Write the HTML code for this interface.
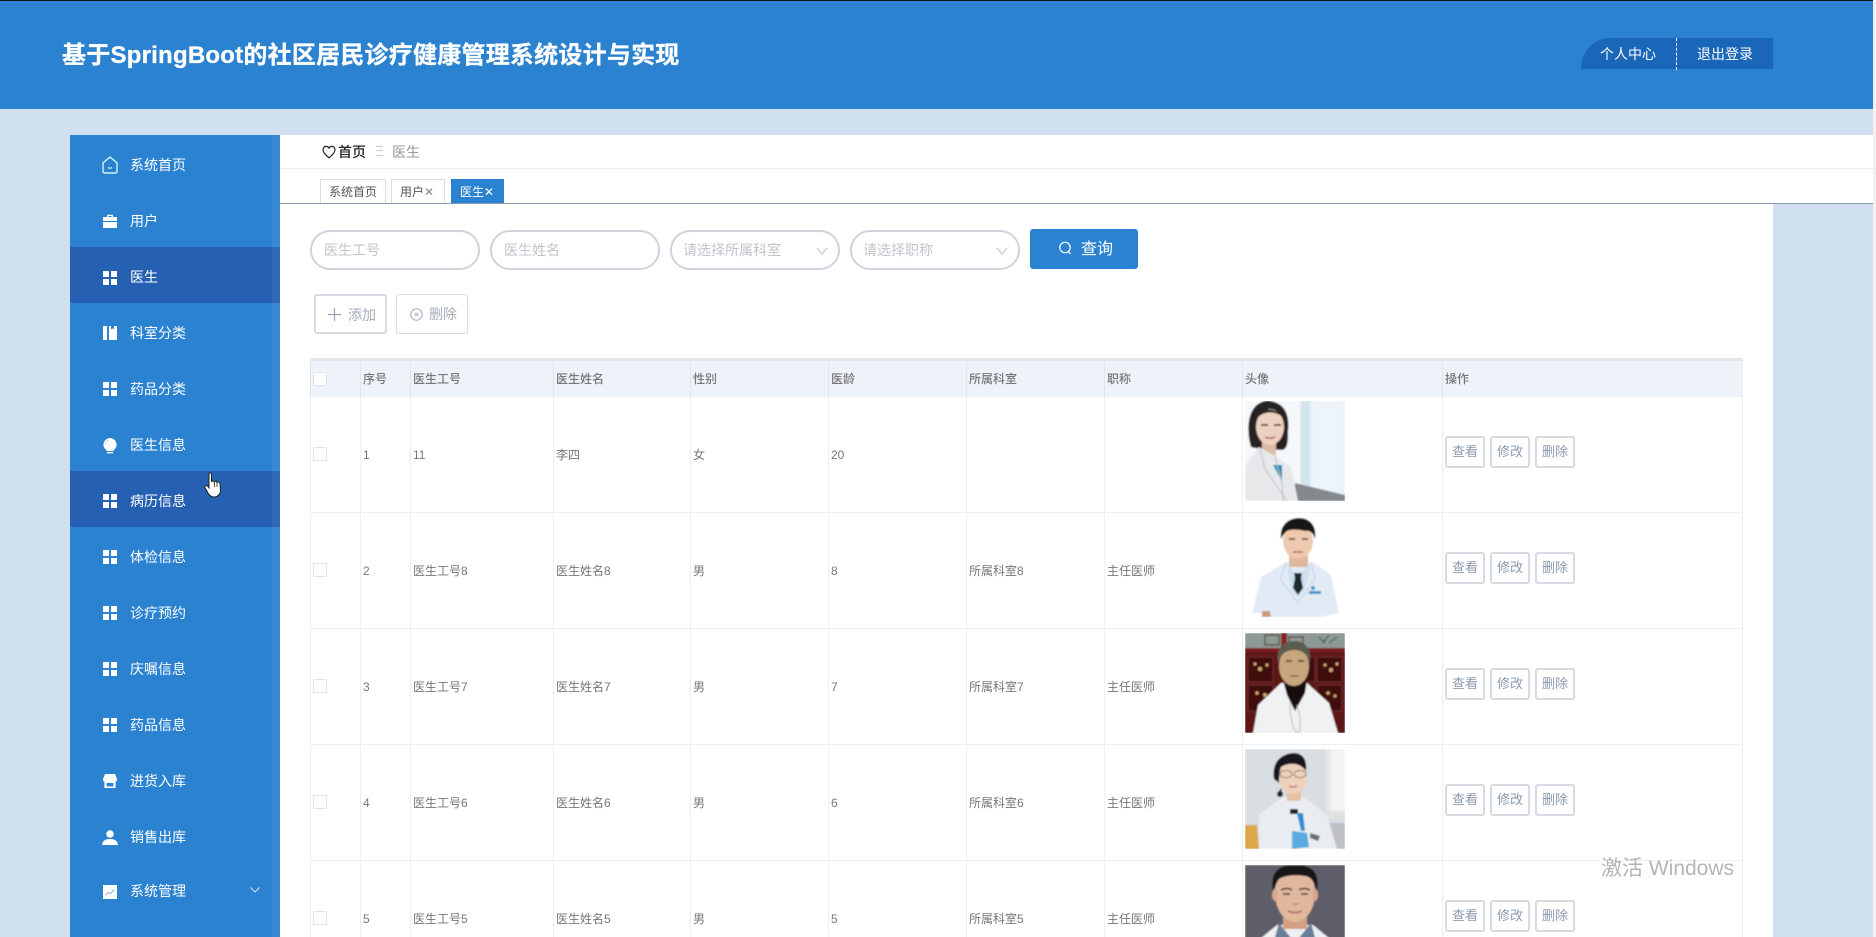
<!DOCTYPE html>
<html lang="zh-CN">
<head>
<meta charset="utf-8">
<title>基于SpringBoot的社区居民诊疗健康管理系统设计与实现</title>
<style>
*{box-sizing:border-box;margin:0;padding:0}
html,body{width:1876px;height:937px;overflow:hidden;background:#d0e0f0;font-family:"Liberation Sans","Noto Sans CJK SC",sans-serif}
#w{position:absolute;left:0;top:0;width:1876px;height:937px;overflow:hidden;background:#d0e0f0}
.abs{position:absolute}
#top{position:absolute;left:0;top:0;width:1873px;height:109px;background:#2b82d0;border-top:1px solid #111}
#title{position:absolute;left:62px;top:38px;font-size:24px;line-height:34px;font-weight:700;color:#fff;white-space:nowrap;letter-spacing:.23px;-webkit-text-stroke:.3px #fff}
#ubtn{position:absolute;left:1581px;top:38px;width:192px;height:31px;background:#1a66b8;border-radius:30px 0 0 0}
#ubtn span{position:absolute;top:6px;font-size:14px;line-height:20px;color:#fff;white-space:nowrap}
#ubtn i{position:absolute;left:95px;top:0;height:32px;border-left:1px dashed #fff}
#sb{position:absolute;left:70px;top:135px;width:210px;height:802px;background:#2b82d0}
#sb:after{content:"";position:absolute;right:0;top:0;width:8px;height:100%;background:rgba(255,255,255,.06)}
.it{position:relative;height:56px;color:#fff;font-size:14px}
.it.on{background:#2560b3}
.it b{position:absolute;left:60px;top:20px;font-weight:400;line-height:20px;white-space:nowrap}
.it svg{position:absolute;left:32px;top:20px}
#scr{position:absolute;left:1873px;top:0;width:3px;height:937px;background:#f1f1f1}
#hd{position:absolute;left:280px;top:135px;width:1593px;height:69px;background:#fff;border-bottom:1px solid #8a9db0}
#hd .ln{position:absolute;left:0;right:0;top:33px;border-top:1px solid #eee}
.tab{position:absolute;top:44px;height:24px;border:1px solid #ddd;border-bottom:0;background:#fff;font-size:12px;line-height:25px;color:#555;white-space:nowrap;padding-left:8px}
.tab.a{background:#2b82d0;color:#fff;border-color:#2b82d0}
.tab em{font-style:normal;color:#888;font-size:12px}
.tab.a em{color:#fff}
#main{position:absolute;left:280px;top:204px;width:1493px;height:733px;background:#fff}
.inp{position:absolute;top:230px;width:170px;height:40px;border:2px solid #cfd3de;border-radius:20px;background:#fff;font-size:14px;line-height:36px;color:#c0c4cc;padding-left:12px;white-space:nowrap}
.inp svg{position:absolute;right:10px;top:15px}
#q{position:absolute;left:1030px;top:229px;width:108px;height:40px;background:#2b82d0;border-radius:3px;color:#fff;font-size:16px;line-height:42px}
#q span{position:absolute;left:51px;top:0}
#q svg{position:absolute;left:28px;top:12px}
.b1{position:absolute;top:294px;height:40px;background:#fff;border-radius:3px;font-size:14px;color:#a3adba;line-height:38px}
#tb{position:absolute;left:310px;top:358px;width:1433px;border-collapse:separate;border-spacing:0;table-layout:fixed;border-top:3px solid #e3e6ea;font-size:12px;color:#777}
#tb th{height:36px;background:#edf3f9;font-weight:500;text-align:left;padding-left:2px;border-left:1px solid #e2e6ea;line-height:36px;color:#777;white-space:nowrap;overflow:hidden}
#tb td{height:116px;padding-left:2px;border-left:1px solid #eeeff1;border-bottom:1px solid #eeeff1;white-space:nowrap;vertical-align:middle;overflow:hidden}
#tb td:last-child,#tb th:last-child{border-right:1px solid #eeeff1}
#tb td.im{vertical-align:top;padding-top:4px;padding-left:2px}
#tb td.im svg{display:block}
#tb td.op{vertical-align:top;padding-top:39px;padding-left:2px}
.ck{display:block;width:14px;height:14px;border:1px solid #e2e4e8;border-radius:2px;background:#fff;margin-top:-1px}
.ob{display:inline-block;width:40px;height:32px;border:2px solid #d7dae2;border-radius:3px;margin-right:5px;font-size:13px;line-height:28px;text-align:center;color:#8c9bb0;background:#fff;float:left}
#wm{position:absolute;left:1601px;top:855px;font-size:21px;line-height:28px;color:#b5b5b5;white-space:nowrap}
</style>
</head>
<body>
<div id="w">
<div id="main"></div>
<div id="top">
  <div id="title">基于SpringBoot的社区居民诊疗健康管理系统设计与实现</div>
</div>
<div id="ubtn"><span style="left:19px">个人中心</span><i></i><span style="left:116px">退出登录</span></div>

<div id="sb">
  <div class="it"><svg width="16" height="18" viewBox="0 0 16 18" style="top:21px"><path d="M8 1 L15 7 V15.5 a1.5 1.5 0 0 1-1.5 1.5 H2.5 A1.5 1.5 0 0 1 1 15.5 V7 Z" fill="none" stroke="#d6f2f8" stroke-width="1.4"/><path d="M6 11.5 q2 1.4 4 0" fill="none" stroke="#d6f2f8" stroke-width="1.2"/></svg><b>系统首页</b></div>
  <div class="it"><svg width="14" height="14" viewBox="0 0 14 14" style="left:33px;top:23px"><path d="M4 3 V0.8 H10 V3 H14 V7 H0 V3 Z M5.4 3 H8.6 V2 H5.4 Z" fill="#fff" fill-rule="evenodd"/><rect x="0" y="8" width="14" height="6" fill="#fff"/></svg><b>用户</b></div>
  <div class="it on"><svg width="14" height="14" viewBox="0 0 14 14" style="left:33px;top:24px"><path d="M0 0h6v6H0zM8 0h6v6H8zM0 8h6v6H0zM8 8h6v6H8z" fill="#fff"/></svg><b>医生</b></div>
  <div class="it"><svg width="14" height="14" viewBox="0 0 14 14" style="left:33px;top:23px"><path d="M0 0h4v14H0zM6 0h2v3.5l1.5-1.2L11 3.5V0h3v14H6z" fill="#fff"/></svg><b>科室分类</b></div>
  <div class="it"><svg width="14" height="14" viewBox="0 0 14 14" style="left:33px;top:23px"><path d="M0 0h6v6H0zM8 0h6v6H8zM0 8h6v6H0zM8 8h6v6H8z" fill="#fff"/></svg><b>药品分类</b></div>
  <div class="it"><svg width="14" height="16" viewBox="0 0 14 16" style="left:33px;top:23px"><path d="M7 0 a6.6 6.6 0 0 1 3.6 12.1 V13 H3.4 V12.1 A6.6 6.6 0 0 1 7 0 Z" fill="#fff"/><rect x="4" y="14" width="6" height="1.4" fill="#fff"/><path d="M2.5 6 a4.5 4.5 0 0 1 3-3.8" fill="none" stroke="#b9daf2" stroke-width="1"/></svg><b>医生信息</b></div>
  <div class="it on"><svg width="14" height="14" viewBox="0 0 14 14" style="left:33px;top:23px"><path d="M0 0h6v6H0zM8 0h6v6H8zM0 8h6v6H0zM8 8h6v6H8z" fill="#fff"/></svg><b>病历信息</b></div>
  <div class="it"><svg width="14" height="14" viewBox="0 0 14 14" style="left:33px;top:23px"><path d="M0 0h6v6H0zM8 0h6v6H8zM0 8h6v6H0zM8 8h6v6H8z" fill="#fff"/></svg><b>体检信息</b></div>
  <div class="it"><svg width="14" height="14" viewBox="0 0 14 14" style="left:33px;top:23px"><path d="M0 0h6v6H0zM8 0h6v6H8zM0 8h6v6H0zM8 8h6v6H8z" fill="#fff"/></svg><b>诊疗预约</b></div>
  <div class="it"><svg width="14" height="14" viewBox="0 0 14 14" style="left:33px;top:23px"><path d="M0 0h6v6H0zM8 0h6v6H8zM0 8h6v6H0zM8 8h6v6H8z" fill="#fff"/></svg><b>庆嘱信息</b></div>
  <div class="it"><svg width="14" height="14" viewBox="0 0 14 14" style="left:33px;top:23px"><path d="M0 0h6v6H0zM8 0h6v6H8zM0 8h6v6H0zM8 8h6v6H8z" fill="#fff"/></svg><b>药品信息</b></div>
  <div class="it"><svg width="14" height="14" viewBox="0 0 14 14" style="left:33px;top:23px"><path d="M2 0 H12 L14 5 Q14 7.5 12.6 7.5 V14 H1.4 V7.5 Q0 7.5 0 5 Z" fill="#fff"/><rect x="3.6" y="9" width="6.8" height="3.4" fill="#2b82d0"/></svg><b>进货入库</b></div>
  <div class="it"><svg width="16" height="15" viewBox="0 0 16 15" style="left:32px;top:23px"><circle cx="8" cy="4" r="3.8" fill="#fff"/><path d="M0 15 C0.5 10.5 3.5 9 8 9 C12.5 9 15.5 10.5 16 15 Z" fill="#fff"/></svg><b>销售出库</b></div>
  <div class="it"><svg width="14" height="14" viewBox="0 0 14 14" style="left:33px;top:22px"><rect width="14" height="14" fill="#fff"/><path d="M2.5 10 L5.5 7.5 L7.5 8.5 L11.5 4.5" fill="none" stroke="#7fb4e4" stroke-width="1"/></svg><b style="top:18px">系统管理</b><svg width="10" height="6" viewBox="0 0 10 6" style="left:180px;top:24px"><path d="M0.5 0.5 L5 5 L9.5 0.5" fill="none" stroke="#cfe3f5" stroke-width="1"/></svg></div>
</div>

<div id="hd">
  <svg class="abs" style="left:42px;top:10px" width="14" height="14" viewBox="0 0 14 14"><path d="M7 12.8 C3 9.6 1 7.4 1 4.8 C1 2.8 2.5 1.4 4.2 1.4 C5.4 1.4 6.4 2 7 3.1 C7.6 2 8.6 1.4 9.8 1.4 C11.5 1.4 13 2.8 13 4.8 C13 7.4 11 9.6 7 12.8 Z" fill="none" stroke="#222" stroke-width="1.2"/></svg>
  <span class="abs" style="left:58px;top:7px;font-size:14px;line-height:20px;color:#222;font-weight:500">首页</span>
  <span class="abs" style="left:96px;top:11px;width:7px;height:10px;border-top:1px solid #ccc;border-bottom:1px solid #ccc"><span class="abs" style="left:0;top:3px;width:7px;border-top:1px solid #ccc"></span></span>
  <span class="abs" style="left:112px;top:7px;font-size:14px;line-height:20px;color:#999">医生</span>
  <div class="ln"></div>
  <div class="tab" style="left:40px;width:66px">系统首页</div>
  <div class="tab" style="left:111px;width:54px">用户<em>✕</em></div>
  <div class="tab a" style="left:171px;width:53px">医生<em>✕</em></div>
</div>

<div class="inp" style="left:310px">医生工号</div>
<div class="inp" style="left:490px">医生姓名</div>
<div class="inp" style="left:670px;padding-left:11px">请选择所属科室<svg width="12" height="8" viewBox="0 0 12 8"><path d="M1 1 L6 7 L11 1" fill="none" stroke="#c0c4cc" stroke-width="1"/></svg></div>
<div class="inp" style="left:850px;padding-left:11px">请选择职称<svg width="12" height="8" viewBox="0 0 12 8"><path d="M1 1 L6 7 L11 1" fill="none" stroke="#c0c4cc" stroke-width="1"/></svg></div>
<div id="q"><svg width="14" height="14" viewBox="0 0 14 14"><circle cx="7" cy="6.5" r="5.2" fill="none" stroke="#fff" stroke-width="1.2"/><path d="M10.5 10.5 L12.5 13" stroke="#fff" stroke-width="1.2"/></svg><span>查询</span></div>

<div class="b1" style="left:314px;width:73px;border:2px solid #d8dbe3"><svg class="abs" style="left:12px;top:12px" width="13" height="13" viewBox="0 0 13 13"><path d="M6.5 0 V13 M0 6.5 H13" stroke="#99a3b0" stroke-width="1.2"/></svg><span class="abs" style="left:32px;top:0">添加</span></div>
<div class="b1" style="left:396px;width:72px;border:1px solid #d8dbe3"><svg class="abs" style="left:13px;top:13px" width="13" height="13" viewBox="0 0 13 13"><circle cx="6.5" cy="6.5" r="5.7" fill="none" stroke="#a3adba"/><path d="M4.8 4.8 L8.2 8.2 M8.2 4.8 L4.8 8.2" stroke="#a3adba"/></svg><span class="abs" style="left:32px;top:0">删除</span></div>

<table id="tb">
<colgroup><col style="width:50px"><col style="width:50px"><col style="width:143px"><col style="width:137px"><col style="width:138px"><col style="width:138px"><col style="width:138px"><col style="width:138px"><col style="width:200px"><col style="width:301px"></colgroup>
<tr><th><span class="ck"></span></th><th>序号</th><th>医生工号</th><th>医生姓名</th><th>性别</th><th>医龄</th><th>所属科室</th><th>职称</th><th>头像</th><th>操作</th></tr>
<tr><td><span class="ck"></span></td><td>1</td><td>11</td><td>李四</td><td>女</td><td>20</td><td></td><td></td>
<td class="im"><svg width="100" height="100" viewBox="0 0 100 100"><defs><filter id="f" x="-5%" y="-5%" width="110%" height="110%"><feGaussianBlur stdDeviation="0.9"/></filter></defs><g filter="url(#f)"><rect width="100" height="100" fill="#f5f8fb"/><rect x="55" width="45" height="95" fill="#e8f2f9"/><rect x="56" width="9" height="90" fill="#d4e4ee"/><rect x="68" y="0" width="30" height="88" fill="#edf5fb"/><path d="M50 82 L100 94 V100 H50 Z" fill="#85898c"/><path d="M6 46 C0 25 4 1 22 0 C40 0 45 15 43 30 C43 40 43 48 37 49 L10 47 Z" fill="#262123"/><rect x="17" y="38" width="14" height="18" fill="#dfbba8"/><ellipse cx="25" cy="26" rx="14" ry="18" fill="#ecd0c0"/><path d="M10 20 C16 10 30 8 40 18 C36 10 24 6 14 10 Z" fill="#262123"/><path d="M16 24 h7 M29 24 h7" stroke="#2a2020" stroke-width="1.6"/><path d="M20 36 q5 2.5 10 0" stroke="#b8655e" stroke-width="1.6" fill="none"/><path d="M0 65 L14 46 L32 56 L46 66 L53 100 H0 Z" fill="#e6e8ea"/><path d="M28 64 L37 64 L37 80 Z" fill="#1a8fb8"/><path d="M15 47 L20 68 L42 100 M30 56 L37 82 L38 100" stroke="#bcc1c6" stroke-width="1" fill="none"/></g></svg></td>
<td class="op"><span class="ob">查看</span><span class="ob">修改</span><span class="ob">删除</span></td></tr>
<tr><td><span class="ck"></span></td><td>2</td><td>医生工号8</td><td>医生姓名8</td><td>男</td><td>8</td><td>所属科室8</td><td>主任医师</td>
<td class="im"><svg width="100" height="100" viewBox="0 0 100 100"><g filter="url(#f)"><rect width="100" height="100" fill="#fff"/><path d="M7 96 L16 60 L41 45 L68 45 L86 58 L94 96 L76 100 H26 L20 96 Z" fill="#e2ebf5"/><path d="M17 94 h8 l1 6 h-9 Z" fill="#c99a80"/><rect x="44" y="34" width="19" height="16" fill="#dfb79c"/><ellipse cx="53" cy="24" rx="15" ry="18" fill="#eec9ae"/><path d="M36 22 C34 6 46 1 54 1 C66 1 72 10 70 22 C68 15 64 13 60 14 C52 12 42 12 40 16 C38 18 37 20 36 22 Z" fill="#151517"/><path d="M44 22 h6 M57 22 h6" stroke="#333" stroke-width="1.4"/><path d="M48 35 h10" stroke="#a9635a" stroke-width="1.4"/><path d="M42 48 L53 58 L66 48 L60 72 L53 80 L46 72 Z" fill="#cfe0f1"/><path d="M49 56 h8 l-1 5 2 10 -5 7 -5 -7 2 -10 Z" fill="#1c2b33"/><path d="M41 46 L35 62 L53 86 M66 46 L70 62 L53 86" stroke="#c3d0df" stroke-width="1" fill="none"/><rect x="64" y="74" width="12" height="3" fill="#3d94c8"/><circle cx="68" cy="71" r="2" fill="#2d9bc6"/></g></svg></td>
<td class="op"><span class="ob">查看</span><span class="ob">修改</span><span class="ob">删除</span></td></tr>
<tr><td><span class="ck"></span></td><td>3</td><td>医生工号7</td><td>医生姓名7</td><td>男</td><td>7</td><td>所属科室7</td><td>主任医师</td>
<td class="im"><svg width="100" height="100" viewBox="0 0 100 100"><g filter="url(#f)"><rect width="100" height="100" fill="#5d1516"/><rect width="100" height="15" fill="#8d9a94"/><rect x="36" width="6" height="16" fill="#8a2320"/><path d="M20 2 h14 v10 h-14 z M44 4 h14 v8 h-14 z" fill="none" stroke="#5b3a2f" stroke-width="1.2"/><path d="M78 10 l6 -8 M84 10 l8 -6 M80 10 l-6 -6" stroke="#51665c" stroke-width="1.4"/><rect y="15" width="100" height="4" fill="#7b1c1c"/><g fill="#3f0d0e" stroke="#7a3030" stroke-width=".8"><rect x="3" y="24" width="25" height="25"/><rect x="3" y="52" width="25" height="26"/><rect x="72" y="24" width="25" height="25"/><rect x="72" y="52" width="25" height="26"/><rect x="60" y="24" width="10" height="25"/></g><g fill="#c8a56e"><circle cx="10" cy="31" r="1.6"/><circle cx="15" cy="36" r="2.2"/><circle cx="22" cy="32" r="1.6"/><circle cx="12" cy="60" r="1.8"/><circle cx="20" cy="62" r="2"/><circle cx="80" cy="32" r="1.6"/><circle cx="86" cy="37" r="2.2"/><circle cx="92" cy="31" r="1.6"/><circle cx="83" cy="60" r="1.8"/><circle cx="90" cy="63" r="1.6"/></g><path d="M8 100 L13 72 L36 50 L62 50 L84 70 L93 100 Z" fill="#f0f1f2"/><path d="M38 47 L62 47 L60 60 L50 78 L42 62 Z" fill="#15110f"/><ellipse cx="49" cy="33" rx="15" ry="20" fill="#c7a67e"/><path d="M33 30 C30 14 40 8 50 8 C60 8 67 16 65 30 C62 20 56 17 49 17 C42 17 36 20 33 30 Z" fill="#5a5b4f"/><path d="M41 28 h6 M53 28 h6" stroke="#3d2d22" stroke-width="1.4"/><path d="M45 43 h9" stroke="#7b4d3f" stroke-width="1.2"/><path d="M45 70 C45 90 50 100 53 100 C56 98 56 85 52 72" fill="none" stroke="#b9b9b3" stroke-width="1"/></g></svg></td>
<td class="op"><span class="ob">查看</span><span class="ob">修改</span><span class="ob">删除</span></td></tr>
<tr><td><span class="ck"></span></td><td>4</td><td>医生工号6</td><td>医生姓名6</td><td>男</td><td>6</td><td>所属科室6</td><td>主任医师</td>
<td class="im"><svg width="100" height="100" viewBox="0 0 100 100"><g filter="url(#f)"><rect width="100" height="100" fill="#d8dee2"/><rect x="82" width="18" height="68" fill="#f2f5f3"/><rect x="81" width="5" height="70" fill="#e4e7e6"/><rect x="82" y="62" width="18" height="8" fill="#e0e2df"/><rect x="82" y="74" width="18" height="26" fill="#bfc1c4"/><path d="M0 76 H12 L14 100 H0 Z" fill="#dca74a"/><path d="M14 100 L14 66 L38 48 L58 48 L82 66 L92 100 Z" fill="#e9edf1"/><rect x="42" y="36" width="14" height="16" fill="#e6c0a4"/><ellipse cx="48" cy="28" rx="14" ry="17" fill="#efd0ba"/><path d="M29 30 C26 10 40 4 50 4 C60 5 62 14 61 22 C54 12 42 14 36 18 C34 24 34 32 34 34 Z" fill="#15151a"/><circle cx="35" cy="45" r="3" fill="#222"/><path d="M36 40 L34 47" stroke="#222" stroke-width="2"/><g fill="none" stroke="#8f8078" stroke-width="1"><ellipse cx="41" cy="25" rx="6" ry="3.6"/><ellipse cx="55" cy="25" rx="6" ry="3.6"/></g><path d="M44 37 q4 2 8 0" stroke="#b9645c" stroke-width="1.3" fill="none"/><path d="M52 64 L58 64 L60 82 H56 Z" fill="#2f8fd0"/><path d="M47 82 L62 84 L64 98 L47 100 Z" fill="#5aa9e0"/><path d="M45 60 h8 v5 h-8 z" fill="#20242a"/><path d="M65 84 l10 3 -2 5 -8 -3 Z" fill="#6a6f78"/></g></svg></td>
<td class="op"><span class="ob">查看</span><span class="ob">修改</span><span class="ob">删除</span></td></tr>
<tr><td><span class="ck"></span></td><td>5</td><td>医生工号5</td><td>医生姓名5</td><td>男</td><td>5</td><td>所属科室5</td><td>主任医师</td>
<td class="im"><svg width="100" height="100" viewBox="0 0 100 100"><g filter="url(#f)"><rect width="100" height="100" fill="#5e5d69"/><path d="M10 78 L32 60 H68 L90 78 V100 H10 Z" fill="#eef0f3"/><path d="M34 58 L50 78 L66 58 L70 72 L50 92 L30 72 Z" fill="#6a7d99"/><rect x="38" y="44" width="24" height="20" fill="#d29f85"/><ellipse cx="50" cy="28" rx="20" ry="29" fill="#e2b89d"/><ellipse cx="30" cy="30" rx="3" ry="6" fill="#d7a98e"/><ellipse cx="70" cy="30" rx="3" ry="6" fill="#d7a98e"/><path d="M28 26 C25 8 32 0 50 0 C68 0 75 8 72 26 C69 16 66 12 60 11 C50 9 38 11 34 14 C31 18 30 22 28 26 Z" fill="#141214"/><path d="M36 25 q6 -3 11 0 M54 25 q5 -3 11 0" stroke="#2d2321" stroke-width="1.6" fill="none"/><path d="M38 29 h7 M56 29 h7" stroke="#302724" stroke-width="1.4"/><path d="M47 38 q3 3 7 0" stroke="#b48269" stroke-width="1.1" fill="none"/><path d="M43 46 q7 3 14 0" stroke="#a5605a" stroke-width="1.6" fill="none"/></g></svg></td>
<td class="op"><span class="ob">查看</span><span class="ob">修改</span><span class="ob">删除</span></td></tr>
</table>

<div id="wm">激活 Windows</div>
<div id="scr"></div>

<svg class="abs" style="left:204px;top:472px" width="20" height="26" viewBox="0 0 20 26"><path d="M5 2 C5 0.5 7.5 0.5 7.5 2 V10 C8 8.5 10 8.5 10.3 10 C10.8 8.8 12.8 8.9 13 10.5 C13.6 9.6 15.8 9.8 16 11.5 L16.5 18 C16.5 22 14 25 10 25 C7 25 5.5 23.5 4 21 L1 15.5 C0.3 14 2.2 12.8 3.4 14 L5 16 Z" fill="#fff" stroke="#222" stroke-width="1"/><path d="M10.3 10 V15 M13 10.5 V15" stroke="#222" stroke-width=".8" fill="none"/></svg>
</div>
</body>
</html>
